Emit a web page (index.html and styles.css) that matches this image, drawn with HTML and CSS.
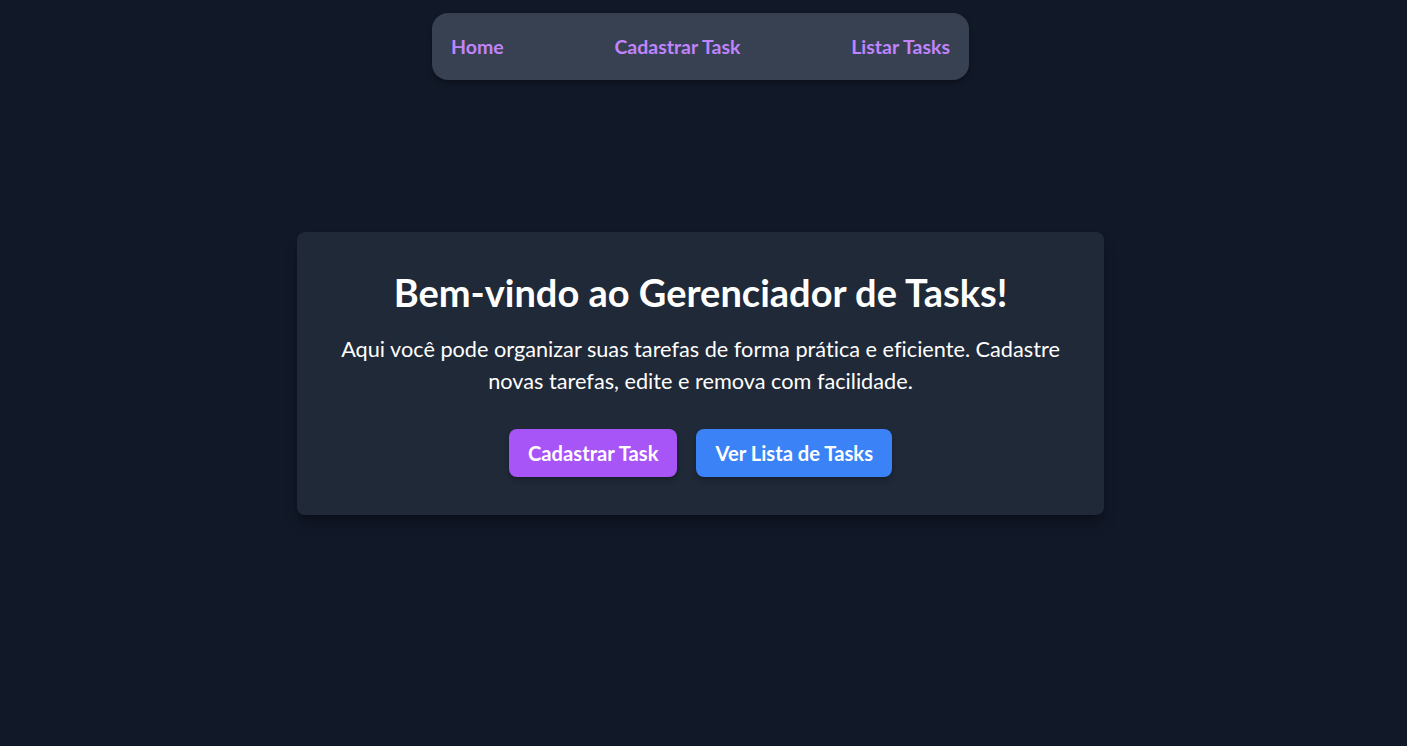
FILE: index.html
```html
<!DOCTYPE html>
<html lang="pt-BR">
<head>
<meta charset="utf-8">
<title>Gerenciador de Tasks</title>
<link rel="stylesheet" href="styles.css">
</head>
<body>
<div class="page">
  <nav class="nav">
    <a href="#" class="nav-link">Home</a>
    <a href="#" class="nav-link">Cadastrar Task</a>
    <a href="#" class="nav-link">Listar Tasks</a>
  </nav>
  <main class="card">
    <h1 class="title">Bem-vindo ao Gerenciador de Tasks!</h1>
    <p class="lead">Aqui você pode organizar suas tarefas de forma prática e eficiente. Cadastre novas tarefas, edite e remova com facilidade.</p>
    <div class="actions">
      <a href="#" class="btn btn-purple">Cadastrar Task</a>
      <a href="#" class="btn btn-blue">Ver Lista de Tasks</a>
    </div>
  </main>
</div>
</body>
</html>
```

FILE: styles.css
```css
* { box-sizing: border-box; }
html, body { margin: 0; padding: 0; }
body {
  background: #111827;
  color: #ffffff;
  font-family: Lato, "Open Sans", sans-serif;
  font-variant-ligatures: no-common-ligatures;
}
.page {
  min-height: 100vh;
  display: grid;
  grid-template: 1fr / 1fr;
  justify-items: center;
  padding-right: 6px;
}
.nav {
  grid-area: 1 / 1;
  align-self: start;
  margin-top: 13px;
  width: 537px;
  height: 67px;
  padding: 0 19px;
  background: #374151;
  border-radius: 16px;
  box-shadow: 0 4px 6px -1px rgba(0,0,0,0.25), 0 2px 4px -2px rgba(0,0,0,0.2);
  display: flex;
  align-items: center;
  justify-content: space-between;
}
.nav-link {
  color: #c084fc;
  text-decoration: none;
  font-size: 19.5px;
  font-weight: 700;
  line-height: 28px;
}
.card {
  grid-area: 1 / 1;
  align-self: center;
  width: 807px;
  background: #1f2937;
  border-radius: 8px;
  padding: 40px 40px 38px;
  text-align: center;
  box-shadow: 0 10px 15px -3px rgba(0,0,0,0.3), 0 4px 6px -4px rgba(0,0,0,0.3);
}
.title {
  margin: 0 0 21px;
  font-size: 38px;
  line-height: 40px;
  font-weight: 700;
}
.lead {
  margin: 0 0 32px;
  font-size: 21.7px;
  line-height: 32px;
  font-weight: 400;
}
.actions {
  display: flex;
  justify-content: center;
  gap: 19px;
}
.btn {
  display: inline-block;
  height: 48px;
  padding: 10px 19px;
  border-radius: 8px;
  color: #ffffff;
  text-decoration: none;
  font-size: 20.2px;
  font-weight: 700;
  line-height: 28px;
  box-shadow: 0 4px 6px -1px rgba(0,0,0,0.2), 0 2px 4px -2px rgba(0,0,0,0.2);
}
.btn-purple { background: #a855f7; }
.btn-blue { background: #3b82f6; }
```
